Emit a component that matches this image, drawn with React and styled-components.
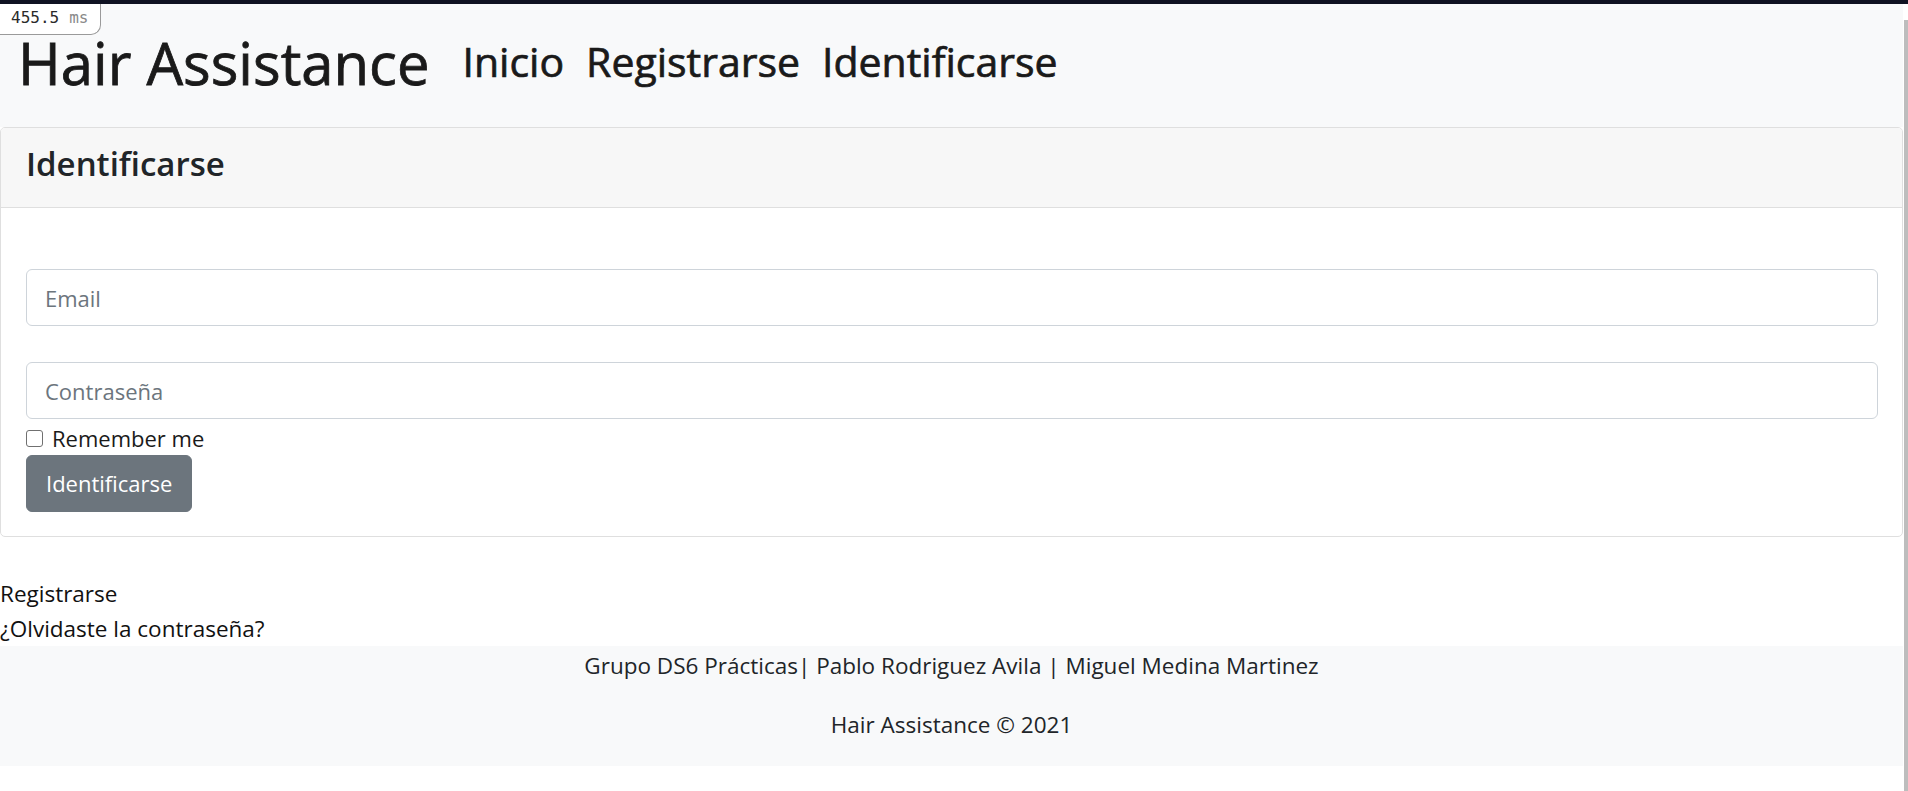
import React from 'react';
import styled, { createGlobalStyle } from 'styled-components';

const GlobalStyle = createGlobalStyle`
  html, body {
    margin: 0;
    padding: 0;
    background: #ffffff;
  }

  body {
    font-family: "Open Sans", "Noto Sans", sans-serif;
    color: #212529;
    font-size: 22px;
    line-height: 1.5;
  }

  * {
    box-sizing: border-box;
  }
`;

const App = () => {
  return (
    <>
      <GlobalStyle />
      <TopStrip />
      <Page>
        {/* Render-time badge overlays the navbar */}
        <TimingBadge>
          <span>455.5</span>
          <BadgeUnit>ms</BadgeUnit>
        </TimingBadge>

        <Navbar>
          <Brand href="#">Hair Assistance</Brand>
          <NavLinks>
            <NavLink href="#">Inicio</NavLink>
            <NavLink href="#">Registrarse</NavLink>
            <NavLink href="#">Identificarse</NavLink>
          </NavLinks>
        </Navbar>

        <Card>
          <CardHeader>
            <CardTitle>Identificarse</CardTitle>
          </CardHeader>
          <CardBody>
            <form onSubmit={(e) => e.preventDefault()}>
              <Field>
                <Input type="email" placeholder="Email" />
              </Field>
              <Field>
                <Input type="password" placeholder="Contraseña" />
              </Field>
              <RememberRow>
                <Checkbox type="checkbox" />
                Remember me
              </RememberRow>
              <SubmitButton type="submit">Identificarse</SubmitButton>
            </form>
          </CardBody>
        </Card>

        <AuthLinks>
          <AuthLink href="#">Registrarse</AuthLink>
          <AuthLink href="#">¿Olvidaste la contraseña?</AuthLink>
        </AuthLinks>

        <Footer>
          <FooterLine>Grupo DS6 Prácticas| Pablo Rodriguez Avila | Miguel Medina Martinez</FooterLine>
          <FooterLine>Hair Assistance © 2021</FooterLine>
        </Footer>
      </Page>
      <ScrollThumb />
    </>
  );
};

const TopStrip = styled.div`
  height: 4px;
  background: #0f1222;
`;

const Page = styled.div`
  position: relative;
  margin-right: 5px;
`;

const TimingBadge = styled.div`
  position: absolute;
  top: 0;
  left: 0;
  display: flex;
  gap: 10px;
  width: 101px;
  height: 31px;
  padding: 4px 0 0 11px;
  background: #ffffff;
  border: 1px solid #9a9a9a;
  border-top: none;
  border-left: none;
  border-radius: 0 0 10px 0;
  font-family: "DejaVu Sans Mono", "Liberation Mono", monospace;
  font-size: 16px;
  line-height: 20px;
  color: #2a2a2a;
`;

const BadgeUnit = styled.span`
  color: #8a8a8a;
`;

const Navbar = styled.nav`
  display: flex;
  align-items: flex-start;
  height: 123px;
  padding: 25px 0 0 18px;
  background: #f8f9fa;
`;

const Brand = styled.a`
  font-size: 58px;
  line-height: 68px;
  color: #1a1a1a;
  -webkit-text-stroke: 0.8px #1a1a1a;
  text-decoration: none;
  margin-right: 33px;
`;

const NavLinks = styled.div`
  display: flex;
  gap: 22px;
  margin-top: 8px;
`;

const NavLink = styled.a`
  font-size: 41px;
  line-height: 48px;
  color: #1a1a1a;
  -webkit-text-stroke: 0.7px #1a1a1a;
  text-decoration: none;
`;

const Card = styled.section`
  border: 1px solid #dfdfdf;
  border-radius: 5px;
  background: #ffffff;
  overflow: hidden;
`;

const CardHeader = styled.div`
  padding: 15px 25px;
  background: #f7f7f7;
  border-bottom: 1px solid #dfdfdf;
`;

const CardTitle = styled.h3`
  margin: 0 0 8px;
  font-size: 33px;
  line-height: 41px;
  font-weight: 600;
  color: #212529;
`;

const CardBody = styled.div`
  padding: 25px 24px 24px 25px;
`;

const Field = styled.div`
  margin-top: 36px;
`;

const Input = styled.input`
  display: block;
  width: 100%;
  height: 57px;
  padding: 11px 18px;
  font-family: "Open Sans", "Noto Sans", sans-serif;
  font-size: 22px;
  line-height: 33px;
  color: #212529;
  background: #ffffff;
  border: 1px solid #ced4da;
  border-radius: 6px;
  outline: none;

  &::placeholder {
    color: #6c757d;
  }
`;

const RememberRow = styled.label`
  display: flex;
  align-items: center;
  margin-top: 3px;
  height: 33px;
  font-size: 22px;
  color: #1a1a1a;
`;

const Checkbox = styled.input`
  appearance: none;
  width: 17px;
  height: 17px;
  margin: 0 9px 0 0;
  border: 1.5px solid #707070;
  border-radius: 3px;
  background: #ffffff;
`;

const SubmitButton = styled.button`
  display: block;
  height: 57px;
  padding: 11px 19px;
  font-family: "Open Sans", "Noto Sans", sans-serif;
  font-size: 22px;
  line-height: 33px;
  color: #ffffff;
  background: #6c757d;
  border: 1px solid #6c757d;
  border-radius: 6px;
  cursor: pointer;
`;

const AuthLinks = styled.div`
  display: flex;
  flex-direction: column;
  align-items: flex-start;
  margin-top: 39px;
`;

const AuthLink = styled.a`
  font-size: 22.5px;
  line-height: 35px;
  color: #111111;
  text-decoration: none;
`;

const Footer = styled.footer`
  display: flow-root;
  padding: 2px 0 0;
  background: #f8f9fa;
  text-align: center;
`;

const FooterLine = styled.p`
  margin: 0 0 24px;
  font-size: 22.5px;
  line-height: 35px;
  color: #212529;
`;

const ScrollThumb = styled.div`
  position: fixed;
  top: 20px;
  right: 0;
  bottom: 0;
  width: 4px;
  background: #bdbdbd;
`;

export default App;
